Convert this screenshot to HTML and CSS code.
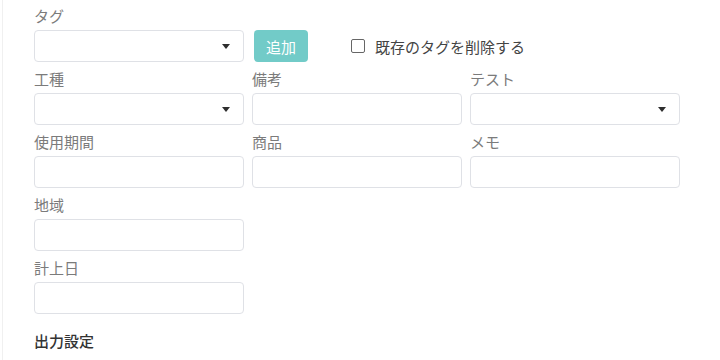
FILE: index.html
```html
<!DOCTYPE html>
<html lang="ja">
  <head>
    <meta charset="UTF-8" />
    <meta name="viewport" content="width=device-width, initial-scale=1.0" />
    <title>検索条件</title>
    <link rel="stylesheet" href="styles.css">
  </head>
  <body>
    <div class="painel">
      <div class="linha">
        <div class="campo">
          <div class="rotulo">タグ</div>
          <div class="tagLinha">
            <div class="caixa selecao"><span class="seta"></span></div>
            <button class="botao">追加</button>
            <label class="marcar">
              <span class="quadrado"></span>
              <span>既存のタグを削除する</span>
            </label>
          </div>
        </div>
      </div>

      <div class="linha grade">
        <div class="campo">
          <div class="rotulo">工種</div>
          <div class="caixa selecao"><span class="seta"></span></div>
        </div>
        <div class="campo">
          <div class="rotulo">備考</div>
          <div class="caixa"></div>
        </div>
        <div class="campo">
          <div class="rotulo">テスト</div>
          <div class="caixa selecao"><span class="seta"></span></div>
        </div>
      </div>

      <div class="linha grade">
        <div class="campo">
          <div class="rotulo">使用期間</div>
          <div class="caixa"></div>
        </div>
        <div class="campo">
          <div class="rotulo">商品</div>
          <div class="caixa"></div>
        </div>
        <div class="campo">
          <div class="rotulo">メモ</div>
          <div class="caixa"></div>
        </div>
      </div>

      <div class="linha grade">
        <div class="campo">
          <div class="rotulo">地域</div>
          <div class="caixa"></div>
        </div>
      </div>

      <div class="linha grade">
        <div class="campo">
          <div class="rotulo">計上日</div>
          <div class="caixa"></div>
        </div>
      </div>

      <div class="titulo">出力設定</div>
    </div>
  </body>
</html>
```

FILE: styles.css
```css
body {
  margin: 0;
  background-color: white;
  font-family: "Noto Sans CJK JP", "Noto Sans", sans-serif;
  font-size: 15px;
}
.painel {
  margin-left: 2px;
  border-left: 1px solid #f0f0f0;
  padding: 6px 0 0 31px;
  height: 354px;
}
.linha {
  margin-bottom: 7px;
}
.grade {
  display: grid;
  grid-template-columns: 210px 210px 210px;
  column-gap: 8px;
}
.rotulo {
  color: #7b7b7b;
  line-height: 20px;
  height: 20px;
  margin-bottom: 4px;
}
.caixa {
  box-sizing: border-box;
  width: 210px;
  height: 32px;
  border: 1px solid #dfe1e6;
  border-radius: 4px;
  background-color: white;
}
.selecao {
  display: flex;
  align-items: center;
  justify-content: flex-end;
  padding-right: 13px;
}
.seta {
  width: 0;
  height: 0;
  border-left: 4px solid transparent;
  border-right: 4px solid transparent;
  border-top: 5px solid #2e2e2e;
}
.tagLinha {
  display: flex;
  align-items: center;
}
.botao {
  margin-left: 10px;
  width: 54px;
  height: 32px;
  border: none;
  border-radius: 4px;
  background-color: #72cbc8;
  color: white;
  font-family: inherit;
  font-size: 15px;
  padding: 0;
}
.marcar {
  display: flex;
  align-items: center;
  margin-left: 43px;
  color: #444;
  font-size: 15px;
}
.quadrado {
  box-sizing: border-box;
  width: 14px;
  height: 14px;
  border: 1px solid #666;
  border-radius: 2px;
  margin-right: 10px;
}
.titulo {
  margin-top: 17px;
  color: #333;
  font-weight: 500;
  line-height: 20px;
}
```
